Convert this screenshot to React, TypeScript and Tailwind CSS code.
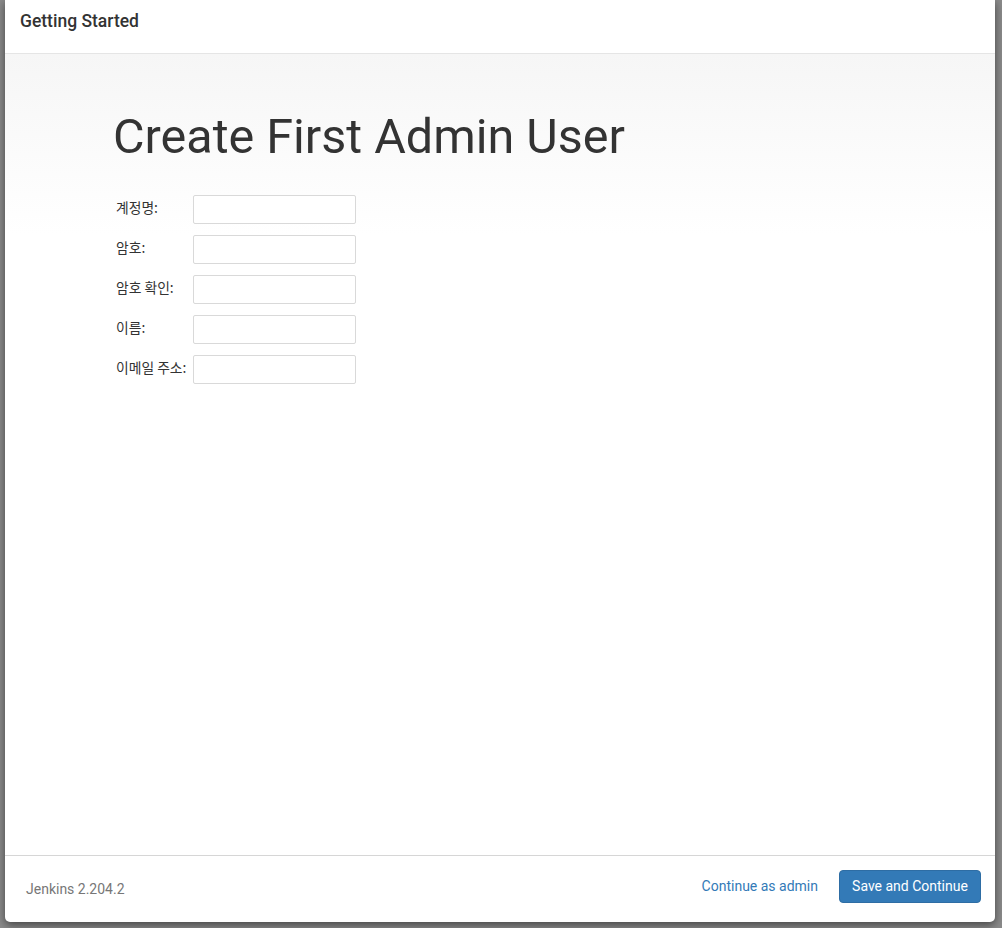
import React from 'react'

const fields = ['계정명:', '암호:', '암호 확인:', '이름:', '이메일 주소:']

export default function App() {
  return (
    <div
      className="h-[928px] w-full bg-[#8a8a8a] pl-[5px] pr-[7px] pb-[6px]"
      style={{ fontFamily: 'Roboto, "Noto Sans CJK KR", sans-serif' }}
    >
      <div className="flex h-full flex-col overflow-hidden rounded-b-[5px] bg-white shadow-[0_3px_8px_rgba(0,0,0,0.5)]">
        {/* header */}
        <div className="h-[54px] shrink-0 border-b border-[#e5e5e5] px-[15px] pt-[10px]">
          <h4 className="text-[17.5px] font-medium leading-[22px] text-[#333]">Getting Started</h4>
        </div>

        {/* body */}
        <div className="flex-1 bg-gradient-to-b from-[#f6f6f6] to-white to-[180px] px-[108px]">
          <h1 className="mt-[56px] text-[48.5px] font-normal leading-[1.1] text-[#333]">
            Create First Admin User
          </h1>
          <table className="mt-[21px] ml-[3px] border-separate border-spacing-y-[11px] text-[13.8px] text-[#333]">
            <tbody>
              {fields.map((f) => (
                <tr key={f}>
                  <td
                    className="w-[77px] whitespace-nowrap pb-[5px] align-middle"
                    style={{ fontFamily: '"Noto Sans CJK KR", sans-serif' }}
                  >
                    {f}
                  </td>
                  <td>
                    <input
                      type="text"
                      className="block h-[29px] w-[163px] rounded-[2px] border border-[#d9d9d9] bg-white"
                    />
                  </td>
                </tr>
              ))}
            </tbody>
          </table>
        </div>

        {/* footer */}
        <div className="flex h-[67px] shrink-0 items-start justify-between border-t border-[#d6d6d6] pl-[21px] pr-[14px] pt-[14px]">
          <span className="mt-[9px] text-[14px] text-[#777]">Jenkins 2.204.2</span>
          <div className="flex items-center">
            <a className="mr-[21px] text-[14px] text-[#337ab7]" href="#">
              Continue as admin
            </a>
            <button className="h-[33px] w-[142px] rounded-[4px] border border-[#2e6da4] bg-[#337ab7] text-[14px] text-white">
              Save and Continue
            </button>
          </div>
        </div>
      </div>
    </div>
  )
}
